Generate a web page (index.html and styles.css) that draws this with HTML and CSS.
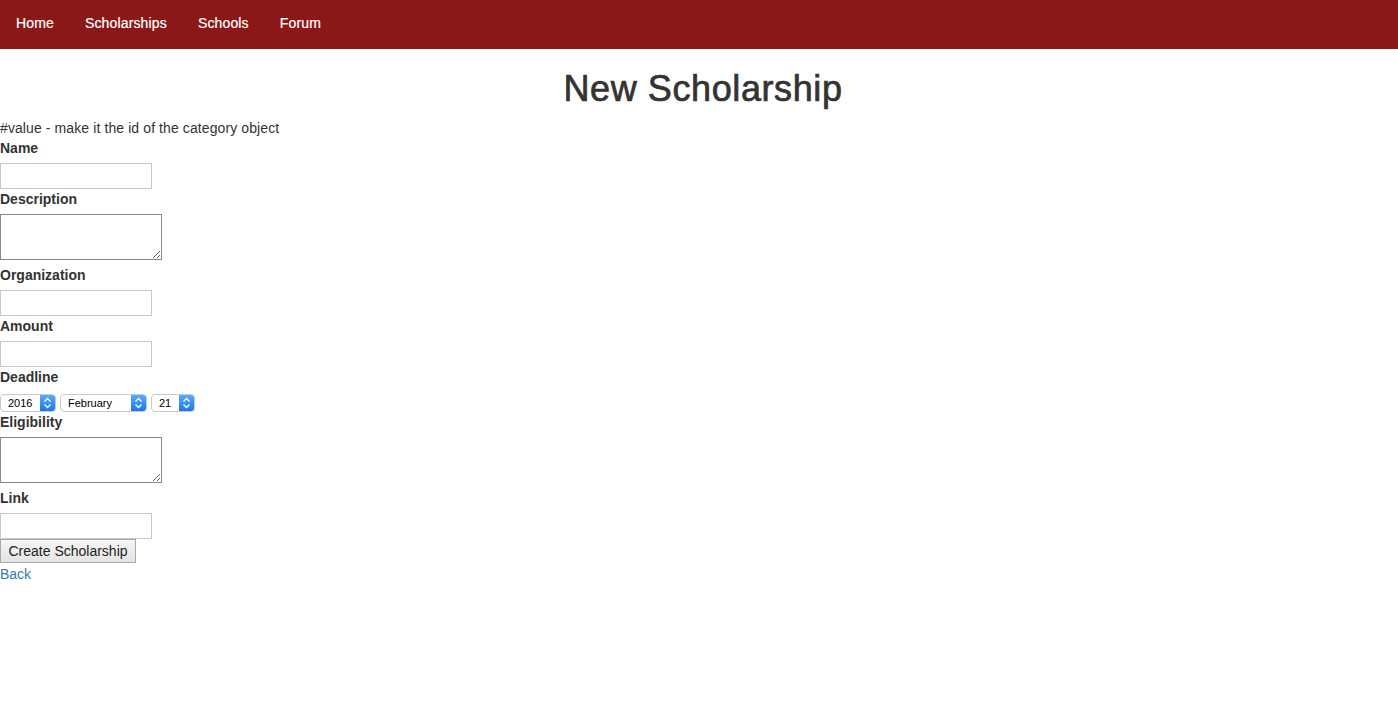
FILE: index.html
```html
<!DOCTYPE html>
<html lang="en">
<head>
  <meta charset="UTF-8">
  <title>New Scholarship</title>
<link rel="stylesheet" href="styles.css">
</head>
<body>

<nav class="navbar">
  <a href="#">Home</a>
  <a href="#">Scholarships</a>
  <a href="#">Schools</a>
  <a href="#">Forum</a>
</nav>

<h1>New Scholarship</h1>

<form class="scholarship-form">
  <div class="note">#value - make it the id of the category object</div>

  <label>Name</label>
  <input type="text" class="text-field">

  <label>Description</label>
  <textarea class="text-area"></textarea>

  <label>Organization</label>
  <input type="text" class="text-field">

  <label>Amount</label>
  <input type="text" class="text-field">

  <label>Deadline</label>
  <div class="date-row">
    <span class="select w-year"><span class="select-value">2016</span><span class="select-arrow"><svg width="9" height="12" viewBox="0 0 9 12"><path d="M1.5 4.5 L4.5 1.5 L7.5 4.5 M1.5 7.5 L4.5 10.5 L7.5 7.5" fill="none" stroke="#fff" stroke-width="1.4"/></svg></span></span>
    <span class="select w-month"><span class="select-value">February</span><span class="select-arrow"><svg width="9" height="12" viewBox="0 0 9 12"><path d="M1.5 4.5 L4.5 1.5 L7.5 4.5 M1.5 7.5 L4.5 10.5 L7.5 7.5" fill="none" stroke="#fff" stroke-width="1.4"/></svg></span></span>
    <span class="select w-day"><span class="select-value">21</span><span class="select-arrow"><svg width="9" height="12" viewBox="0 0 9 12"><path d="M1.5 4.5 L4.5 1.5 L7.5 4.5 M1.5 7.5 L4.5 10.5 L7.5 7.5" fill="none" stroke="#fff" stroke-width="1.4"/></svg></span></span>
  </div>

  <label>Eligibility</label>
  <textarea class="text-area"></textarea>

  <label>Link</label>
  <input type="text" class="text-field">

  <button type="button" class="submit">Create Scholarship</button>
</form>

<a href="#" class="back">Back</a>

</body>
</html>
```

FILE: styles.css
```css
body {
  margin: 0px;

  font-family: 'Liberation Sans', Arial, sans-serif;
  font-size: 14px;
  line-height: 20px;
  color: #333333;
}

.navbar {
  display: flex;
  height: 49px;
  background-color: #8b1717;
}

.navbar a {
  padding: 0px 15.5px;
  line-height: 46px;
  letter-spacing: 0.15px;
  color: #ffffff;
  text-decoration: none;
  -webkit-text-stroke: 0.2px #ffffff;
}

.navbar a:first-child { padding-left: 16px; }

h1 {
  margin: 20px 0px 9px;
  font-size: 36px;
  font-weight: normal;
  letter-spacing: 0.6px;
  line-height: 40px;
  text-align: center;
  padding-left: 8px;
  -webkit-text-stroke: 0.7px #333333; /* medium weight look */
}

.scholarship-form {
  display: flex;
  flex-direction: column;
  align-items: flex-start;
}

.note { letter-spacing: 0.1px; }

label {
  display: block;
  font-weight: bold;
  margin-bottom: 5px;
}

.text-field {
  box-sizing: border-box;
  width: 152px;
  height: 26px;
  margin: 0px;
  border: 1px solid #c8c8c8;
  padding: 2px 4px;
}

.text-area {
  box-sizing: border-box;
  width: 162px;
  height: 46px;
  margin: 0px 0px 5px;
  border: 1px solid #8a8a8a;
  resize: both;
}

/* selects imitating the native mac look */
.date-row {
  display: flex;
  gap: 4px;
  height: 20px;
  padding-top: 2px;
  box-sizing: border-box;
}

.select {
  display: flex;
  box-sizing: border-box;
  height: 18px;
  border: 1px solid #c9c9c9;
  border-radius: 4px;
  background: #ffffff;
  font-size: 11px;
  line-height: 16px;
  color: #000000;
  overflow: hidden;
}

.select-value {
  flex: 1;
  padding-left: 7px;
}

.select-arrow {
  display: flex;
  align-items: center;
  justify-content: center;
  width: 15px;
  background: linear-gradient(#5aa9fb, #1a78f2);
}

.w-year  { width: 56px; }
.w-month { width: 87px; }
.w-day   { width: 44px; }

.submit {
  width: 136px;
  height: 24px;
  margin: 0px 0px 1px;
  padding: 0px;
  border: 1px solid #a9a9a9;
  background: linear-gradient(#f6f6f6, #e4e4e4);
  font-family: 'Liberation Sans', Arial, sans-serif;
  font-size: 14px;
  color: #222222;
}

.back {
  display: block;
  color: #337ab7;
  text-decoration: none;
}
```
